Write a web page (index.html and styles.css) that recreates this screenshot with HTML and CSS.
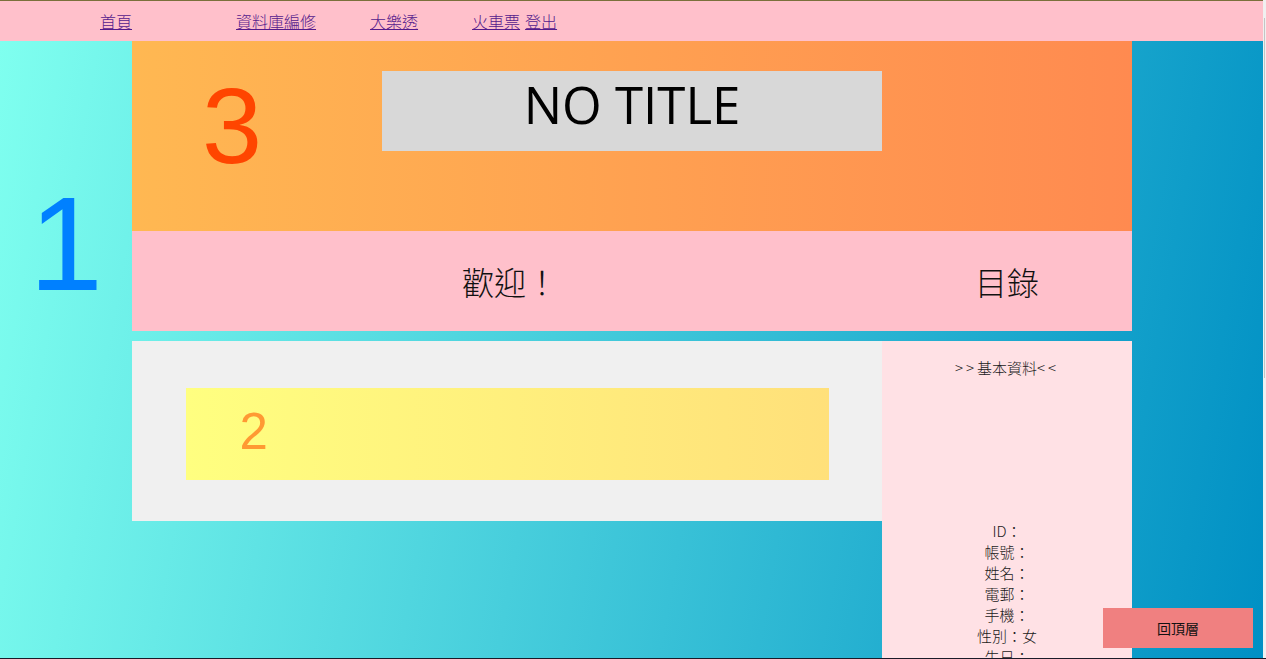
FILE: index.html
```html
<!DOCTYPE html>
<html lang="zh-Hant">
<head>
<meta charset="utf-8">
<title>NO TITLE</title>
<link rel="stylesheet" href="styles.css">
</head>
<body>
<nav class="topnav">
  <a href="#" class="nav-link home">首頁</a>
  <a href="#" class="nav-link">資料庫編修</a>
  <a href="#" class="nav-link">大樂透</a>
  <a href="#" class="nav-link train">火車票</a>
  <a href="#" class="nav-link logout">登出</a>
</nav>
<div class="page">
  <aside class="left-col"><span class="big-one">1</span></aside>
  <main class="main-col">
    <header class="header">
      <span class="big-three">3</span>
      <div class="title-box">NO TITLE</div>
    </header>
    <div class="band">
      <div class="welcome">歡迎！</div>
      <div class="toc">目錄</div>
    </div>
    <div class="content">
      <section class="panel">
        <div class="yellow"><span class="num-two">2</span></div>
      </section>
      <aside class="side">
        <div class="side-title"><span class="arrows">&gt;&gt;</span>基本資料<span class="arrows">&lt;&lt;</span></div>
        <div class="side-spacer"></div>
        <div class="side-line">ID：</div>
        <div class="side-line">帳號：</div>
        <div class="side-line">姓名：</div>
        <div class="side-line">電郵：</div>
        <div class="side-line">手機：</div>
        <div class="side-line">性別：女</div>
        <div class="side-line">生日：</div>
      </aside>
    </div>
  </main>
</div>
<a href="#" class="to-top">回頂層</a>
</body>
</html>
```
FILE: styles.css
```css
html {
  background: #f0f0f0;
}
body {
  margin: 0;
  width: 1263px;
  font-family: "Noto Sans CJK TC", "Noto Sans", sans-serif;
  color: #111;
}
body::before {
  content: "";
  position: fixed;
  right: 1px;
  top: 18px;
  width: 1px;
  height: 360px;
  background: #c4c4c4;
}
body::after {
  content: "";
  position: fixed;
  left: 0;
  right: 0;
  bottom: 0;
  height: 1px;
  background: #1b1a28;
}
.topnav {
  display: flex;
  align-items: center;
  height: 40px;
  border-top: 1px solid #7b6f3b;
  background: #ffc0cb;
  padding-left: 100px;
  font-size: 16px;
  font-weight: 300;
}
.nav-link {
  color: #551a8b;
  text-decoration: underline;
  line-height: 40px;
  margin-right: 54px;
}
.nav-link.home {
  margin-right: 104px;
}
.nav-link.train {
  margin-right: 5px;
}
.page {
  display: grid;
  grid-template-columns: 132px 1000px 1fr;
  background-color: #0090c4;
  background-image: linear-gradient(100deg, #7fffef 0%, #0090c4 100%);
  background-size: 100% 618px;
  background-repeat: no-repeat;
}
.left-col {
  text-align: center;
  padding-top: 137px;
}
.big-one {
  font-family: "Liberation Sans", Arial, sans-serif;
  font-size: 133px;
  line-height: 1;
  color: #0080ff;
}
.header {
  display: flex;
  height: 190px;
  background: linear-gradient(to right, #ffb852, #ff8a50);
}
.big-three {
  font-family: "Liberation Sans", Arial, sans-serif;
  font-size: 108px;
  line-height: 1;
  color: #ff4500;
  margin-top: 31px;
  margin-left: 70px;
  width: 180px;
}
.title-box {
  margin-top: 30px;
  width: 500px;
  height: 80px;
  background: #d8d8d8;
  text-align: center;
  font-family: "Open Sans", sans-serif;
  font-size: 51px;
  line-height: 66px;
  color: #000;
}
.band {
  display: grid;
  grid-template-columns: 750px 250px;
  height: 100px;
  background: #ffc0cb;
  font-size: 32px;
  font-weight: 300;
  line-height: 100px;
  text-align: center;
  color: #111;
}
.welcome {
  padding-left: 6px;
}
.content {
  display: grid;
  grid-template-columns: 750px 250px;
  margin-top: 10px;
  align-items: start;
}
.panel {
  height: 180px;
  background: #f0f0f0;
  padding-top: 47px;
  box-sizing: border-box;
}
.yellow {
  width: 643px;
  height: 92px;
  margin: 0 auto;
  background: linear-gradient(to right, #ffff80, #ffe07a);
  padding-left: 54px;
  box-sizing: border-box;
}
.num-two {
  font-family: "Liberation Sans", Arial, sans-serif;
  font-size: 51px;
  line-height: 88px;
  color: #ff9933;
}
.side {
  min-height: 420px;
  background: #ffe1e5;
  padding-top: 16px;
  text-align: center;
  font-size: 15px;
  font-weight: 300;
  line-height: 21px;
  color: #1a1a1a;
}
.arrows {
  letter-spacing: 3px;
}
.side-spacer {
  height: 142px;
}
.to-top {
  position: fixed;
  right: 13px;
  bottom: 11px;
  width: 150px;
  height: 40px;
  background: #f08080;
  color: #111;
  text-decoration: none;
  font-size: 14px;
  line-height: 40px;
  text-align: center;
}
```
